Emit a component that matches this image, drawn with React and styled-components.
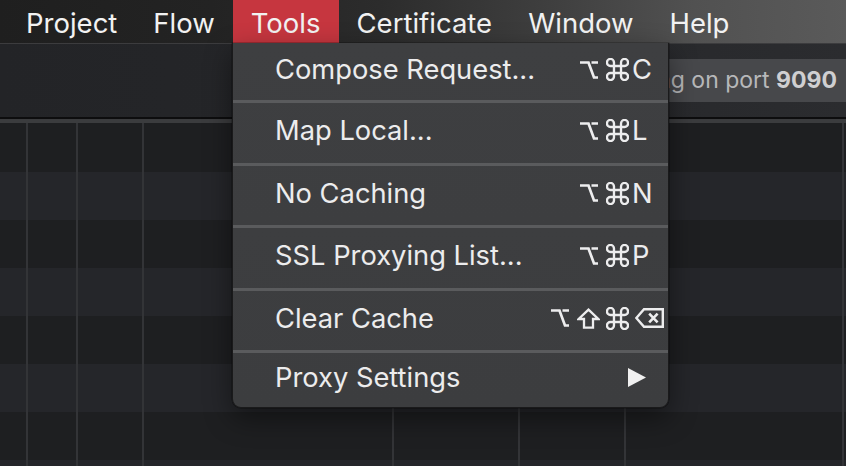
import React from "react";
import styled, { createGlobalStyle } from "styled-components";

const GlobalStyle = createGlobalStyle`
  html, body { margin: 0; padding: 0; background: #1e1f21; }
  body { font-family: Inter, "Noto Sans", "Liberation Sans", sans-serif; }
  * { box-sizing: border-box; }
`;

const Page = styled.div`
  position: relative;
  width: 846px;
  height: 466px;
  overflow: hidden;
  display: flex;
  flex-direction: column;
  background: #1e1f21;
`;

const MenuBar = styled.div`
  height: 43px;
  flex: none;
  display: flex;
  padding-left: 8px;
  background: linear-gradient(90deg, #1f1f1f 0%, #232323 25%, #2c2c2c 45%, #3f3f3f 65%, #515151 82%, #5a5a5a 100%);
`;

const MenuTitle = styled.div`
  display: flex;
  align-items: center;
  padding: 2px 18px 0;
  font-size: 27.5px;
  color: #f2f2f2;
  background: ${(p) => (p.$active ? "#c6363f" : "transparent")};
`;

const Toolbar = styled.div`
  height: 76px;
  flex: none;
  display: flex;
  align-items: center;
  justify-content: flex-end;
  border-top: 1px solid #3c3c3e;
  background: linear-gradient(90deg, #232427 0%, #26272a 60%, #2b2c2f 100%);
  border-bottom: 2px solid #0d0d0e;
`;

const StatusPill = styled.div`
  width: 190px;
  height: 43px;
  display: flex;
  align-items: center;
  justify-content: flex-end;
  overflow: hidden;
  padding: 0 9px 2px 0;
  background: #47484b;
  border-radius: 6px 0 0 6px;
  font-size: 23px;
  color: #b7b8ba;
  white-space: nowrap;
`;

const StatusText = styled.span`
  flex: none;
`;

const Port = styled.b`
  font-weight: 700;
  color: #cfcfd1;
`;

const HeaderLine = styled.div`
  height: 4px;
  flex: none;
  background: #3b3c3e;
`;

const Table = styled.div`
  flex: 1;
  display: flex;
  flex-direction: column;
`;

const Row = styled.div`
  flex: none;
  height: ${(p) => (p.$first ? 49 : 48)}px;
  display: grid;
  grid-template-columns: 28px 50px 66px 250px 126px 106px 218px 1fr;
  background: ${(p) => (p.$odd ? "#25262a" : "#1e1f21")};
`;

const Cell = styled.div`
  border-right: 2px solid #333437;
`;

const Dropdown = styled.div`
  position: absolute;
  top: 43px;
  left: 232px;
  width: 437px;
  display: flex;
  flex-direction: column;
  background: linear-gradient(180deg, #3e3f41 0%, #3c3d3f 100%);
  border: 1px solid #1a1a1b;
  border-top: none;
  border-radius: 0 0 9px 9px;
  box-shadow: 0 10px 28px rgba(0, 0, 0, 0.45), 0 0 0 0.5px rgba(0, 0, 0, 0.4);
`;

const Item = styled.div`
  height: ${(p) => p.$h}px;
  display: grid;
  grid-template-columns: 1fr auto 32px;
  align-items: center;
  padding: 0 4px 4px 42px;
  font-size: 27.3px;
  color: #ececed;
`;

const Separator = styled.div`
  height: 3px;
  background: #5a5b5d;
`;

const Mods = styled.div`
  display: flex;
  justify-content: flex-end;
`;

const Glyph = styled.span`
  width: 29px;
  display: flex;
  justify-content: center;
  align-items: center;
`;

const Key = styled.span`
  display: flex;
  align-items: center;
  margin-left: ${(p) => p.$ml || 0}px;
`;

const stroke = "#ededee";

const OptionIcon = () => (
  <svg width="18" height="18" viewBox="0 0 18 18" fill="none">
    <path d="M0 1.5 H8.5 L14 16.5 H18 M11.5 1.5 H18" stroke={stroke} strokeWidth="2.7" />
  </svg>
);

const CommandIcon = () => (
  <svg width="23" height="23" viewBox="2.2 2.2 19.6 19.6" fill="none">
    <path
      d="M15 6v12a3 3 0 1 0 3-3H6a3 3 0 1 0 3 3V6a3 3 0 1 0-3 3h12a3 3 0 1 0-3-3"
      stroke={stroke}
      strokeWidth="2"
    />
  </svg>
);

const ShiftIcon = () => (
  <svg width="23" height="21" viewBox="0 0 23 21" fill="none">
    <path d="M11.5 1.6 L21.3 11 H16 V19.6 H7 V11 H1.7 Z" stroke={stroke} strokeWidth="2.3" />
  </svg>
);

const DeleteIcon = () => (
  <svg width="29" height="20" viewBox="0 0 29 20" fill="none">
    <path d="M9 1.2 H27.8 V18.8 H9 L1.4 10 Z" stroke={stroke} strokeWidth="2.4" strokeLinejoin="miter" />
    <path d="M14.2 5.6 L22.6 14.4 M22.6 5.6 L14.2 14.4" stroke={stroke} strokeWidth="2.6" />
  </svg>
);

const ArrowIcon = () => (
  <svg width="18" height="19" viewBox="0 0 18 19">
    <polygon points="0,0 18,9.5 0,19" fill="#f0f0f0" />
  </svg>
);

const menuTitles = ["Project", "Flow", "Tools", "Certificate", "Window", "Help"];

const items = [
  { label: "Compose Request...", mods: ["opt", "cmd"], key: "C", h: 57 },
  { label: "Map Local...", mods: ["opt", "cmd"], key: "L", h: 59.5 },
  { label: "No Caching", mods: ["opt", "cmd"], key: "N", h: 59.5 },
  { label: "SSL Proxying List...", mods: ["opt", "cmd"], key: "P", h: 59.5 },
  { label: "Clear Cache", mods: ["opt", "shift", "cmd"], key: "del", h: 59.5 },
  { label: "Proxy Settings", mods: [], key: "sub", h: 53.5 },
];

const modIcon = {
  opt: <OptionIcon />,
  cmd: <CommandIcon />,
  shift: <ShiftIcon />,
};

const renderKey = (k) => {
  if (k === "del")
    return (
      <Key $ml={3}>
        <DeleteIcon />
      </Key>
    );
  if (k === "sub")
    return (
      <Key $ml={-4}>
        <ArrowIcon />
      </Key>
    );
  return <Key>{k}</Key>;
};

export default function App() {
  const rows = Array.from({ length: 8 });
  return (
    <>
      <GlobalStyle />
      <Page>
        <MenuBar>
          {menuTitles.map((t) => (
            <MenuTitle key={t} $active={t === "Tools"}>
              {t}
            </MenuTitle>
          ))}
        </MenuBar>
        <Toolbar>
          <StatusPill>
            <StatusText>
              Listening on port <Port>9090</Port>
            </StatusText>
          </StatusPill>
        </Toolbar>
        <HeaderLine />
        <Table>
          {rows.map((_, i) => (
            <Row key={i} $first={i === 0} $odd={i % 2 === 1}>
              {Array.from({ length: 7 }).map((__, j) => (
                <Cell key={j} />
              ))}
              <div />
            </Row>
          ))}
        </Table>
        <Dropdown>
          {items.map((it, i) => (
            <React.Fragment key={it.label}>
              {i > 0 && <Separator />}
              <Item $h={it.h}>
                <span>{it.label}</span>
                <Mods>
                  {it.mods.map((m) => (
                    <Glyph key={m}>{modIcon[m]}</Glyph>
                  ))}
                </Mods>
                {renderKey(it.key)}
              </Item>
            </React.Fragment>
          ))}
        </Dropdown>
      </Page>
    </>
  );
}
